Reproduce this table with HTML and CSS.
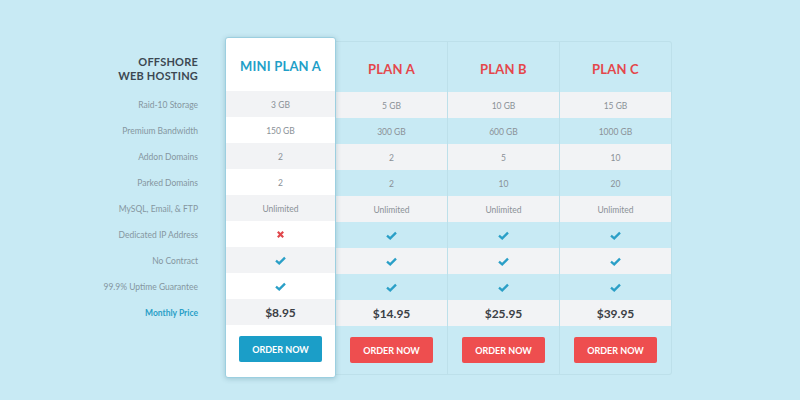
FILE: index.html
```html
<!DOCTYPE html>
<html>
<head>
<meta charset="utf-8">
<link rel="stylesheet" href="styles.css">
</head>
<body>
<div class="pricing">
  <div class="labels">
    <div class="labels-head">OFFSHORE<br>WEB HOSTING</div>
    <div class="label">Raid-10 Storage</div>
    <div class="label">Premium Bandwidth</div>
    <div class="label">Addon Domains</div>
    <div class="label">Parked Domains</div>
    <div class="label">MySQL, Email, &amp; FTP</div>
    <div class="label">Dedicated IP Address</div>
    <div class="label">No Contract</div>
    <div class="label">99.9% Uptime Guarantee</div>
    <div class="label label-price">Monthly Price</div>
  </div>

  <div class="plan plan-featured">
    <div class="plan-head">MINI PLAN A</div>
    <div class="cell odd">3 GB</div>
    <div class="cell">150 GB</div>
    <div class="cell odd">2</div>
    <div class="cell">2</div>
    <div class="cell odd">Unlimited</div>
    <div class="cell"><svg class="icon" width="9" height="9" viewBox="0 0 10 10"><path d="M2 2 L8 8 M8 2 L2 8" stroke="#e0474c" stroke-width="2.4" stroke-linecap="butt"/></svg></div>
    <div class="cell odd"><svg class="icon" width="11" height="9" viewBox="0 0 11 9"><path d="M1 4.6 L4.2 7.4 L10 1.6" fill="none" stroke="#2a9fc7" stroke-width="2.3"/></svg></div>
    <div class="cell"><svg class="icon" width="11" height="9" viewBox="0 0 11 9"><path d="M1 4.6 L4.2 7.4 L10 1.6" fill="none" stroke="#2a9fc7" stroke-width="2.3"/></svg></div>
    <div class="cell odd price">$8.95</div>
    <div class="plan-foot"><a class="btn btn-blue">ORDER NOW</a></div>
  </div>

  <div class="plans-rest">
    <div class="plan">
      <div class="plan-head">PLAN A</div>
      <div class="cell odd">5 GB</div>
      <div class="cell">300 GB</div>
      <div class="cell odd">2</div>
      <div class="cell">2</div>
      <div class="cell odd">Unlimited</div>
      <div class="cell"><svg class="icon" width="11" height="9" viewBox="0 0 11 9"><path d="M1 4.6 L4.2 7.4 L10 1.6" fill="none" stroke="#2a9fc7" stroke-width="2.3"/></svg></div>
      <div class="cell odd"><svg class="icon" width="11" height="9" viewBox="0 0 11 9"><path d="M1 4.6 L4.2 7.4 L10 1.6" fill="none" stroke="#2a9fc7" stroke-width="2.3"/></svg></div>
      <div class="cell"><svg class="icon" width="11" height="9" viewBox="0 0 11 9"><path d="M1 4.6 L4.2 7.4 L10 1.6" fill="none" stroke="#2a9fc7" stroke-width="2.3"/></svg></div>
      <div class="cell odd price">$14.95</div>
      <div class="plan-foot"><a class="btn btn-red">ORDER NOW</a></div>
    </div>
    <div class="plan">
      <div class="plan-head">PLAN B</div>
      <div class="cell odd">10 GB</div>
      <div class="cell">600 GB</div>
      <div class="cell odd">5</div>
      <div class="cell">10</div>
      <div class="cell odd">Unlimited</div>
      <div class="cell"><svg class="icon" width="11" height="9" viewBox="0 0 11 9"><path d="M1 4.6 L4.2 7.4 L10 1.6" fill="none" stroke="#2a9fc7" stroke-width="2.3"/></svg></div>
      <div class="cell odd"><svg class="icon" width="11" height="9" viewBox="0 0 11 9"><path d="M1 4.6 L4.2 7.4 L10 1.6" fill="none" stroke="#2a9fc7" stroke-width="2.3"/></svg></div>
      <div class="cell"><svg class="icon" width="11" height="9" viewBox="0 0 11 9"><path d="M1 4.6 L4.2 7.4 L10 1.6" fill="none" stroke="#2a9fc7" stroke-width="2.3"/></svg></div>
      <div class="cell odd price">$25.95</div>
      <div class="plan-foot"><a class="btn btn-red">ORDER NOW</a></div>
    </div>
    <div class="plan plan-last">
      <div class="plan-head">PLAN C</div>
      <div class="cell odd">15 GB</div>
      <div class="cell">1000 GB</div>
      <div class="cell odd">10</div>
      <div class="cell">20</div>
      <div class="cell odd">Unlimited</div>
      <div class="cell"><svg class="icon" width="11" height="9" viewBox="0 0 11 9"><path d="M1 4.6 L4.2 7.4 L10 1.6" fill="none" stroke="#2a9fc7" stroke-width="2.3"/></svg></div>
      <div class="cell odd"><svg class="icon" width="11" height="9" viewBox="0 0 11 9"><path d="M1 4.6 L4.2 7.4 L10 1.6" fill="none" stroke="#2a9fc7" stroke-width="2.3"/></svg></div>
      <div class="cell"><svg class="icon" width="11" height="9" viewBox="0 0 11 9"><path d="M1 4.6 L4.2 7.4 L10 1.6" fill="none" stroke="#2a9fc7" stroke-width="2.3"/></svg></div>
      <div class="cell odd price">$39.95</div>
      <div class="plan-foot"><a class="btn btn-red">ORDER NOW</a></div>
    </div>
  </div>
</div>
</body>
</html>
```

FILE: styles.css
```css
html, body {
  margin: 0;
  padding: 0;
}
body {
  background: #c8eaf4;
  font-family: Lato, "Open Sans", sans-serif;
  width: 800px;
  height: 400px;
  overflow: hidden;
}
.pricing {
  display: flex;
  align-items: flex-start;
  padding-top: 41px;
}
.labels {
  width: 198px;
  padding-right: 27px;
  text-align: right;
}
.labels-head {
  height: 50px;
  box-sizing: border-box;
  padding-top: 14px;
  font-size: 11px;
  line-height: 14px;
  font-weight: 700;
  letter-spacing: 0.2px;
  color: #3c4852;
}
.label {
  height: 26px;
  line-height: 28px;
  font-size: 8.5px;
  color: #8596a0;
}
.label-price {
  color: #2a9fc7;
  font-weight: 700;
}
.plan {
  width: 111px;
  display: flex;
  flex-direction: column;
  border-right: 1px solid #bde0ea;
}
.plan-last {
  border-right: none;
}
.plan-featured {
  position: relative;
  z-index: 2;
  margin-top: -4px;
  width: 111px;
  background: #fff;
  border: 1px solid #9ccfe0;
  border-radius: 3px;
  box-shadow: 0 1px 5px rgba(40, 90, 110, 0.25);
  box-sizing: border-box;
}
.plans-rest {
  display: flex;
  border: 1px solid #bde0ea;
  border-left: none;
  border-radius: 0 3px 3px 0;
}
.plan-head {
  height: 50px;
  line-height: 54px;
  text-align: center;
  font-size: 13px;
  font-weight: 700;
  letter-spacing: 0.2px;
  color: #e4474b;
}
.plan-featured .plan-head {
  height: 53px;
  line-height: 57px;
  color: #1f9fc8;
}
.cell {
  height: 26px;
  display: flex;
  align-items: center;
  justify-content: center;
  padding-top: 1px;
  box-sizing: border-box;
  font-size: 8.5px;
  color: #8a9197;
}
.cell.odd {
  background: #f2f3f5;
}
.cell.price {
  font-size: 12px;
  font-weight: 700;
  color: #3b4045;
}
.plan-foot {
  height: 48px;
  display: flex;
  align-items: center;
  justify-content: center;
}
.plan-featured .plan-foot {
  height: 52px;
  align-items: flex-start;
  padding-top: 11px;
  box-sizing: border-box;
}
.btn {
  display: flex;
  align-items: center;
  justify-content: center;
  width: 83px;
  height: 26px;
  border-radius: 2px;
  color: #fff;
  font-size: 9px;
  font-weight: 700;
}
.btn-blue {
  background: #1b9ec8;
}
.btn-red {
  background: #ee4e4f;
}
.icon {
  display: block;
}
```
